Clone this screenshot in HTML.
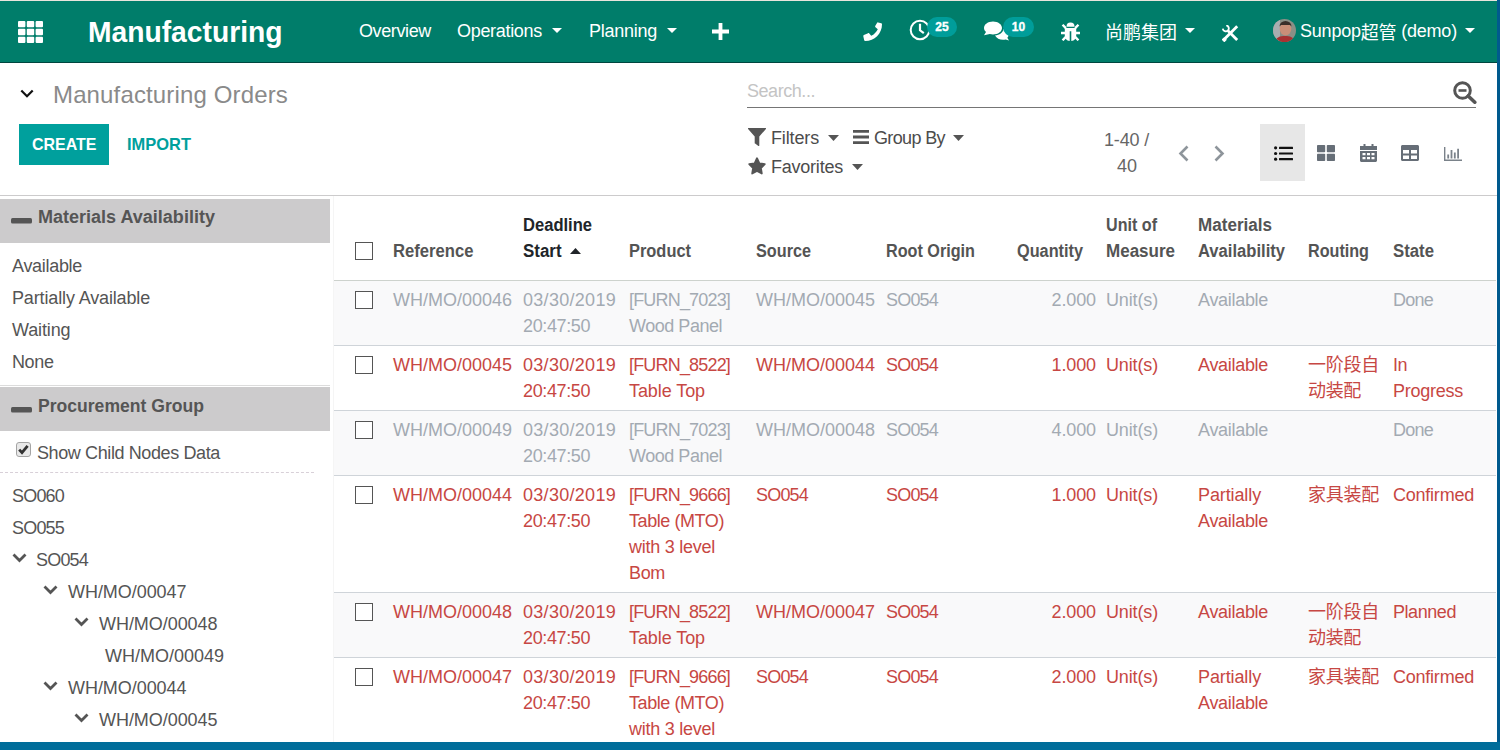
<!DOCTYPE html>
<html lang="en"><head>
<meta charset="utf-8">
<title>Manufacturing Orders - Odoo</title>
<style>
*{box-sizing:border-box}
html,body{margin:0;padding:0}
body{width:1500px;height:750px;overflow:hidden;position:relative;background:#fff;
 font-family:"Liberation Sans","Noto Sans CJK SC",sans-serif;font-size:18px;line-height:26px;color:#4c4c4c}
svg{display:block;position:absolute}
.abs,.t{position:absolute;white-space:nowrap}
th span,td span{white-space:nowrap;text-align:left}
.t{line-height:1}
b,strong,th{font-weight:700}
/* window frame */
.frame-top{position:absolute;left:0;top:0;width:1497px;height:1px;background:#e9e5dd;z-index:9}
.frame-right{position:absolute;left:1497px;top:0;width:3px;height:750px;background:#005a8e;z-index:9}
.frame-bottom{position:absolute;left:0;top:742px;width:1500px;height:8px;background:#006d9a;z-index:9}
/* navbar */
.navbar{position:absolute;left:0;top:1px;width:1497px;height:62px;background:#007d6a;border-bottom:1px solid #00463f;color:#fff}
.navbar .t{color:#fff;font-size:18px}
.brand{font-size:30px !important;font-weight:700}
.cjk{position:relative;top:2px}
.badge{position:absolute;height:20px;border-radius:10px;background:#009d9a;color:#fff;font-size:12px;font-weight:700;line-height:20px;text-align:center;-webkit-text-stroke:0.35px #fff}
/* control panel */
.cp{position:absolute;left:0;top:63px;width:1497px;height:133px;background:#fff;border-bottom:1px solid #cccbcc}
.crumb{font-size:24px;color:#8a8a8a}
.btn-create{position:absolute;left:19px;top:61px;width:90px;height:41px;background:#00a09d;color:#fff;font-weight:700;font-size:17px}
.btn-import{color:#00a09d;font-weight:700;font-size:17px}
.search-line{position:absolute;left:747px;top:44px;width:729px;height:1px;background:#757575}
.placeholder{color:#c4c4c4}
.opt{color:#4c4c4c}
.pager{color:#666}
.vs-active{position:absolute;left:1260px;top:61px;width:45px;height:57px;background:#e7e7e7}
/* side panel */
.side{position:absolute;left:0;top:196px;width:334px;height:546px;border-right:1px solid #f5f5f5;overflow:hidden}
.side h4{position:absolute;left:0;width:330px;height:44px;margin:0;background:#cccbcc;font-size:18px;font-weight:700;color:#555}
.side .t{color:#555}
.dash{position:absolute;left:0;top:276px;width:314px;height:0;border-top:1px dashed #d8d0d8}
.hr{position:absolute;left:0;top:189px;width:330px;height:1px;background:#dcdcdc}
/* list */
.list{position:absolute;left:334px;top:196px;width:1162px;height:546px;overflow:hidden}
table{border-collapse:collapse;table-layout:fixed;width:1162px}
th,td{padding:6px 5px;vertical-align:top;text-align:left;white-space:nowrap;overflow:visible}
thead th{padding:15px 5px 16px;vertical-align:bottom;color:#545454;border-bottom:1px solid #cdd2cd;height:84px}
thead th.sorted{color:#212529}
tbody tr{border-bottom:1px solid #cfd4d9}
tbody tr:nth-child(odd){background:#f9f9fa}
tr.muted td{color:#a3aab2}
tr.danger td{color:#c74743}
td.num,th.num{text-align:right}
th.num{padding-right:18px}
.cb{display:inline-block;width:18px;height:18px;border:1px solid #555;background:#fff;vertical-align:top;margin-top:4px}
th .cb{margin-top:0;margin-bottom:4px;vertical-align:bottom}
td.sel,th.sel{padding-left:21px;padding-right:0}
</style>
</head>
<body>
<div class="frame-top"></div>

<header class="navbar">
  <svg style="left:18px;top:20px" width="25" height="22" viewBox="0 0 25 22" fill="#fff"><rect x="0" y="0" width="7.4" height="6.3" rx="1"></rect><rect x="8.8" y="0" width="7.4" height="6.3" rx="1"></rect><rect x="17.6" y="0" width="7.4" height="6.3" rx="1"></rect><rect x="0" y="7.85" width="7.4" height="6.3" rx="1"></rect><rect x="8.8" y="7.85" width="7.4" height="6.3" rx="1"></rect><rect x="17.6" y="7.85" width="7.4" height="6.3" rx="1"></rect><rect x="0" y="15.7" width="7.4" height="6.3" rx="1"></rect><rect x="8.8" y="15.7" width="7.4" height="6.3" rx="1"></rect><rect x="17.6" y="15.7" width="7.4" height="6.3" rx="1"></rect></svg>
  <a class="t brand" style="left: 88px; top: 16px; width: 194.5px; transform: scaleX(0.941); transform-origin: 0px 50%;">Manufacturing</a>
  <nav>
    <a class="t" style="left: 359px; top: 21px; letter-spacing: -0.38px;">Overview</a>
    <a class="t" style="left: 457px; top: 21px; letter-spacing: -0.31px;">Operations</a>
    <svg style="left:552px;top:27px" width="10" height="5" viewBox="0 0 10 5"><path d="M0 0h10L5 5z" fill="#fff"></path></svg>
    <a class="t" style="left: 589px; top: 21px; letter-spacing: -0.26px;">Planning</a>
    <svg style="left:667px;top:27px" width="10" height="5" viewBox="0 0 10 5"><path d="M0 0h10L5 5z" fill="#fff"></path></svg>
    <svg style="left:712px;top:22px" width="17" height="17" viewBox="0 0 17 17"><path d="M6.6 0h3.8v6.6H17v3.8h-6.6V17H6.6v-6.6H0V6.600h6.6z" fill="#fff"></path></svg>
  </nav>
  <!-- systray -->
  <svg style="left:863px;top:21px" width="19" height="19" viewBox="0 0 19 19"><path d="M14.2 0.300 L18.2 1.2 C18.700 1.3 19 1.700 19 2.200 C19 11.500 11.500 19 2.200 19 C1.700 19 1.300 18.700 1.200 18.200 L0.300 14.200 C0.200 13.700 0.400 13.200 0.900 13 L5.100 11.200 C5.500 11 6 11.100 6.300 11.500 L8.200 13.800 C11.100 12.400 13.400 10.100 14.800 7.200 L12.500 5.300 C12.100 5 12 4.500 12.200 4.100 L14 0.900 C14.200 0.400 14.700 0.200 14.200 0.300z" fill="#fff"></path></svg>
  <svg style="left:909px;top:18px" width="22" height="22" viewBox="0 0 22 22"><circle cx="11" cy="11" r="9.300" fill="none" stroke="#fff" stroke-width="2"></circle><path d="M11 4.800v6.500l3.800 2.800" fill="none" stroke="#fff" stroke-width="2.200"></path></svg>
  <span class="badge" style="left:927px;top:16px;width:30px">25</span>
  <svg style="left:983px;top:19px" width="27" height="21" viewBox="0 0 27 21"><path d="M12 15.500 C13.500 18.300 16.500 19.800 20 19.800 C20.900 19.800 21.800 19.700 22.600 19.500 L26 20.600 L24.300 17.800 C25.300 16.800 25.800 15.600 25.800 14.300 C25.800 11.800 23.500 9.700 20.500 9 C20 12.500 16.500 15.200 12 15.500z" fill="#fff"></path><path d="M10 1.500 C15 1.500 19 4.400 19 8 C19 11.600 15 14.500 10 14.500 C8.900 14.500 7.800 14.400 6.800 14.100 L1 15.300 L3 12 C1.700 10.900 1 9.500 1 8 C1 4.400 5 1.500 10 1.500z" fill="#fff" stroke="#007d6a" stroke-width="1.200" paint-order="stroke"></path></svg>
  <span class="badge" style="left:1003px;top:16px;width:31px">10</span>
  <svg style="left:1061px;top:21px" width="19" height="19" viewBox="0 0 19 19" fill="#fff"><path d="M5.500 4.700 a4 4.200 0 0 1 8 0z"></path><path d="M3.800 6 h11.400 v7.400 a5.700 5.600 0 0 1 -4.900 5.500 v-9.700 h-1.600 v9.700 a5.700 5.600 0 0 1 -4.900 -5.500z"></path><path d="M0 9.800h4.500v2.400h-4.500zM14.500 9.800h4.500v2.400h-4.500z"></path><path d="M0.700 3.600l1.700-1.700 3.300 3.300-1.700 1.700zM18.300 3.600l-1.700-1.700-3.300 3.300 1.700 1.700zM0.700 17.400l1.700 1.700 3.300-3.300-1.700-1.700zM18.300 17.400l-1.700 1.700-3.300-3.300 1.700-1.700z"></path></svg>
  <a class="t" style="left:1105px;top:23px">尚鹏集团</a>
  <svg style="left:1185px;top:27px" width="10" height="5" viewBox="0 0 10 5"><path d="M0 0h10L5 5z" fill="#fff"></path></svg>
  <svg style="left:1222px;top:24px" width="17" height="17" viewBox="0 0 17 17" fill="none" stroke="#fff"><path d="M15.200 1.300 L1.300 15.200" stroke-width="2.800"></path><path d="M1 16 L3.500 13.500" stroke-width="3.800"></path><path d="M6 5.800 L15.200 15" stroke-width="2.800"></path><path d="M0.800 3.600 a3 3 0 0 0 5.200 1.800 a3 3 0 0 0 -1.800 -5" stroke-width="1.800"></path></svg>
  <svg style="left:1273px;top:18px" width="23" height="23" viewBox="0 0 23 23"><defs><clipPath id="av"><circle cx="11.500" cy="11.500" r="11.500"></circle></clipPath></defs><g clip-path="url(#av)"><rect width="23" height="23" fill="#8a8f86"></rect><rect x="0" y="0" width="7" height="23" fill="#a9aeb0"></rect><ellipse cx="12.500" cy="10" rx="5.800" ry="6.500" fill="#c98f78"></ellipse><path d="M6.500 7.500 a6 5.500 0 0 1 12 0 l-1.500 -1.500 h-9z" fill="#3a2f2a"></path><path d="M2 23 c1 -5 5 -6 10 -6 s9 1 10 6z" fill="#a83232"></path></g></svg>
  <a class="t" style="left: 1300px; top: 21px; letter-spacing: -0.21px;">Sunpop<span class="cjk">超管</span> (demo)</a>
  <svg style="left:1465px;top:27px" width="10" height="5" viewBox="0 0 10 5"><path d="M0 0h10L5 5z" fill="#fff"></path></svg>
</header>

<section class="cp">
  <svg style="left:20px;top:26px" width="14" height="9" viewBox="0 0 14 9"><path d="M1.300 1.500 L7 7.200 L12.700 1.500" fill="none" stroke="#111" stroke-width="2.200"></path></svg>
  <h1 class="t crumb" style="left: 53px; top: 20px; margin: 0px; font-weight: 400; letter-spacing: 0.14px;">Manufacturing Orders</h1>
  <button class="btn-create" style="border:0;padding:0;font-family:inherit"><span class="t" style="left: 13px; top: 12px; color: rgb(255, 255, 255); width: 64.5px; transform: scaleX(0.94); transform-origin: 0px 50%;">CREATE</span></button>
  <a class="t btn-import" style="left: 127px; top: 73px; width: 64px; transform: scaleX(0.968); transform-origin: 0px 50%;">IMPORT</a>

  <span class="t placeholder" style="left: 747px; top: 19px; letter-spacing: -0.45px;">Search...</span>
  <div class="search-line"></div>
  <svg style="left:1453px;top:18px" width="24" height="23" viewBox="0 0 24 23"><circle cx="9.500" cy="9.500" r="7.800" fill="none" stroke="#555" stroke-width="3"></circle><path d="M15.200 15 L21.800 21.200" stroke="#555" stroke-width="3.600" stroke-linecap="round"></path><path d="M5.500 9.500h8" stroke="#555" stroke-width="2.600"></path></svg>

  <svg style="left:748px;top:65px" width="18" height="18" viewBox="0 0 18 18"><path d="M0.500 0h17c0.500 0 0.700 0.500 0.400 0.900L11.300 8.500V17.400c0 0.500-0.500 0.700-0.900 0.500l-3.300-2.300c-0.300-0.200-0.400-0.400-0.400-0.700V8.500L0.100 0.900C-0.200 0.500 0 0 0.500 0z" fill="#555"></path></svg>
  <span class="t opt" style="left: 771px; top: 66px; letter-spacing: -0.14px;">Filters</span>
  <svg style="left:828px;top:72px" width="11" height="6" viewBox="0 0 11 6"><path d="M0 0h11L5.500 6z" fill="#555"></path></svg>
  <svg style="left:853px;top:67px" width="16" height="14" viewBox="0 0 16 14"><path d="M0 0h16v2.800H0zM0 5.600h16v2.800H0zM0 11.200h16V14H0z" fill="#555"></path></svg>
  <span class="t opt" style="left: 874px; top: 66px; letter-spacing: -0.63px;">Group By</span>
  <svg style="left:953px;top:72px" width="11" height="6" viewBox="0 0 11 6"><path d="M0 0h11L5.500 6z" fill="#555"></path></svg>
  <svg style="left:748px;top:94px" width="18" height="18" viewBox="0 0 18 18"><path d="M9 1.200l2.400 5.100 5.400 0.800-3.900 3.900 0.900 5.500L9 13.900l-4.800 2.600 0.900-5.500L1.200 7.100l5.400-0.800z" fill="#555" stroke="#555" stroke-width="1.800" stroke-linejoin="round"></path></svg>
  <span class="t opt" style="left: 771px; top: 95px; letter-spacing: -0.23px;">Favorites</span>
  <svg style="left:852px;top:101px" width="11" height="6" viewBox="0 0 11 6"><path d="M0 0h11L5.500 6z" fill="#555"></path></svg>

  <span class="t pager" style="left: 1104px; top: 68px; letter-spacing: -0.17px;">1-40 /</span>
  <span class="t pager" style="left: 1117px; top: 94px; letter-spacing: -0.02px;">40</span>
  <svg style="left:1178px;top:82px" width="11" height="17" viewBox="0 0 11 17"><path d="M9.500 1.500 L2.500 8.500 L9.500 15.500" fill="none" stroke="#8e959b" stroke-width="2.600"></path></svg>
  <svg style="left:1214px;top:82px" width="11" height="17" viewBox="0 0 11 17"><path d="M1.500 1.500 L8.500 8.500 L1.500 15.500" fill="none" stroke="#8e959b" stroke-width="2.600"></path></svg>

  <div class="vs-active"></div>
  <svg style="left:1274px;top:83px" width="19" height="15" viewBox="0 0 19 15" fill="#111"><circle cx="1.600" cy="1.800" r="1.600"></circle><circle cx="1.600" cy="7.500" r="1.600"></circle><circle cx="1.600" cy="13.200" r="1.600"></circle><rect x="5" y="0.700" width="14" height="2.200" rx="0.500"></rect><rect x="5" y="6.400" width="14" height="2.200" rx="0.500"></rect><rect x="5" y="12.100" width="14" height="2.200" rx="0.500"></rect></svg>
  <svg style="left:1317px;top:82px" width="18" height="16" viewBox="0 0 18 16" fill="#666e77"><rect x="0" y="0" width="8.200" height="7.200" rx="0.800"></rect><rect x="9.800" y="0" width="8.200" height="7.200" rx="0.800"></rect><rect x="0" y="8.800" width="8.200" height="7.200" rx="0.800"></rect><rect x="9.800" y="8.800" width="8.200" height="7.200" rx="0.800"></rect></svg>
  <svg style="left:1360px;top:81px" width="17" height="18" viewBox="0 0 17 18" fill="#666e77"><path d="M3.500 0h2v3h-2zM11.500 0h2v3h-2z"></path><path d="M0 2h17v4H0z"></path><path d="M0 7h17v9.500c0 0.800-0.700 1.500-1.500 1.500h-14C0.700 18 0 17.300 0 16.500z M2.500 9v2.300h3V9z M7 9v2.300h3V9z M11.500 9v2.300h3V9z M2.500 13v2.300h3V13z M7 13v2.300h3V13z M11.500 13v2.300h3V13z" fill-rule="evenodd"></path></svg>
  <svg style="left:1401px;top:82px" width="18" height="16" viewBox="0 0 18 16" fill="#666e77"><path d="M1.500 0h15c0.800 0 1.500 0.700 1.500 1.500v13c0 0.800-0.700 1.500-1.500 1.500h-15C0.700 16 0 15.300 0 14.500v-13C0 0.700 0.700 0 1.500 0z M2 5v3.500h6V5z M10 5v3.500h6V5z M2 10.500V14h6v-3.500z M10 10.500V14h6v-3.500z" fill-rule="evenodd"></path></svg>
  <svg style="left:1444px;top:84px" width="18" height="14" viewBox="0 0 18 14" fill="#7a828a"><path d="M0 0h1.400v12.600H18V14H0z"></path><path d="M3.300 7.500h1.800v4H3.300zM6.600 3h1.800v8.500H6.600zM9.900 5.500h1.800v6H9.900zM13.200 1.800h1.800v9.700h-1.800z"></path></svg>
</section>

<aside class="side">
  <h4 style="top:3px"><svg style="left:11px;top:19px" width="21" height="6" viewBox="0 0 21 6"><rect width="21" height="5.500" rx="1.500" fill="#555"></rect></svg><span class="t" style="left: 38px; top: 9px; width: 177px; transform: scaleX(1.001); transform-origin: 0px 50%;">Materials Availability</span></h4>
  <span class="t" style="left: 12px; top: 61px; letter-spacing: -0.3px;">Available</span>
  <span class="t" style="left: 12px; top: 93px; letter-spacing: -0.14px;">Partially Available</span>
  <span class="t" style="left: 12px; top: 125px; letter-spacing: -0.12px;">Waiting</span>
  <span class="t" style="left: 12px; top: 157px; letter-spacing: -0.38px;">None</span>
  <div class="hr"></div>
  <h4 style="top:191px"><svg style="left:11px;top:20px" width="21" height="6" viewBox="0 0 21 6"><rect width="21" height="5.500" rx="1.500" fill="#555"></rect></svg><span class="t" style="left: 38px; top: 10px; width: 166px; transform: scaleX(0.976); transform-origin: 0px 50%;">Procurement Group</span></h4>
  <svg style="left:16px;top:246px" width="15" height="15" viewBox="0 0 15 15"><rect x="0.500" y="0.500" width="14" height="14" rx="2.500" fill="#e9e9e9" stroke="#a4a4a4"></rect><path d="M3.200 7.600l2.800 3 5.600-6.800" fill="none" stroke="#333" stroke-width="2.800"></path></svg>
  <span class="t" style="left: 37px; top: 248px; letter-spacing: -0.39px;">Show Child Nodes Data</span>
  <div class="dash"></div>
  <span class="t" style="left: 12px; top: 291px; letter-spacing: -0.81px;">SO060</span>
  <span class="t" style="left: 12px; top: 323px; letter-spacing: -0.81px;">SO055</span>
  <svg class="chev" style="left:12px;top:357px" width="15" height="10" viewBox="0 0 15 10"><path d="M1.500 1.500 L7.500 7.500 L13.500 1.500" fill="none" stroke="#555" stroke-width="2.800"></path></svg>
  <span class="t" style="left: 36px; top: 355px; letter-spacing: -0.81px;">SO054</span>
  <svg class="chev" style="left:43px;top:389px" width="15" height="10" viewBox="0 0 15 10"><path d="M1.500 1.500 L7.500 7.500 L13.500 1.500" fill="none" stroke="#555" stroke-width="2.800"></path></svg>
  <span class="t" style="left: 68px; top: 387px; letter-spacing: -0.05px;">WH/MO/00047</span>
  <svg class="chev" style="left:74px;top:421px" width="15" height="10" viewBox="0 0 15 10"><path d="M1.500 1.500 L7.500 7.500 L13.500 1.500" fill="none" stroke="#555" stroke-width="2.800"></path></svg>
  <span class="t" style="left: 99px; top: 419px; letter-spacing: -0.05px;">WH/MO/00048</span>
  <span class="t" style="left:105px;top:451px">WH/MO/00049</span>
  <svg class="chev" style="left:43px;top:485px" width="15" height="10" viewBox="0 0 15 10"><path d="M1.500 1.500 L7.500 7.500 L13.500 1.500" fill="none" stroke="#555" stroke-width="2.800"></path></svg>
  <span class="t" style="left: 68px; top: 483px; letter-spacing: -0.05px;">WH/MO/00044</span>
  <svg class="chev" style="left:74px;top:517px" width="15" height="10" viewBox="0 0 15 10"><path d="M1.500 1.500 L7.500 7.500 L13.500 1.500" fill="none" stroke="#555" stroke-width="2.800"></path></svg>
  <span class="t" style="left: 99px; top: 515px; letter-spacing: -0.05px;">WH/MO/00045</span>
</aside>

<main class="list">
<table>
<colgroup><col style="width:54px"><col style="width:130px"><col style="width:106px"><col style="width:127px"><col style="width:130px"><col style="width:126px"><col style="width:94px"><col style="width:92px"><col style="width:110px"><col style="width:85px"><col style="width:108px"></colgroup>
<thead>
<tr>
 <th class="sel"><span class="cb"></span></th>
 <th><span style="display: inline-block; width: 80.5px; transform: scaleX(0.925); transform-origin: 0px 50%;">Reference</span></th>
 <th class="sorted"><span style="display: inline-block; width: 69px; transform: scaleX(0.92); transform-origin: 0px 50%;">Deadline</span><br><span style="display: inline-block; width: 38.5px; transform: scaleX(0.939); transform-origin: 0px 50%;">Start</span> <svg style="position:static;display:inline-block;margin-left:3px;vertical-align:3px" width="11" height="6" viewBox="0 0 11 6"><path d="M0 6h11L5.500 0z" fill="#212529"></path></svg></th>
 <th><span style="display: inline-block; width: 62px; transform: scaleX(0.912); transform-origin: 0px 50%;">Product</span></th>
 <th><span style="display: inline-block; width: 55px; transform: scaleX(0.901); transform-origin: 0px 50%;">Source</span></th>
 <th><span style="display: inline-block; width: 89px; transform: scaleX(0.899); transform-origin: 0px 50%;">Root Origin</span></th>
 <th class="num"><span style="display: inline-block; width: 66px; transform: scaleX(0.904); transform-origin: 0px 50%;">Quantity</span></th>
 <th><span style="display: inline-block; width: 51px; transform: scaleX(0.895); transform-origin: 0px 50%;">Unit of</span><br><span style="display: inline-block; width: 69px; transform: scaleX(0.945); transform-origin: 0px 50%;">Measure</span></th>
 <th><span style="display: inline-block; width: 74px; transform: scaleX(0.948); transform-origin: 0px 50%;">Materials</span><br><span style="display: inline-block; width: 87px; transform: scaleX(0.922); transform-origin: 0px 50%;">Availability</span></th>
 <th><span style="display: inline-block; width: 61px; transform: scaleX(0.897); transform-origin: 0px 50%;">Routing</span></th>
 <th><span style="display: inline-block; width: 41px; transform: scaleX(0.931); transform-origin: 0px 50%;">State</span></th>
</tr>
</thead>
<tbody>
<tr class="muted">
 <td class="sel"><span class="cb"></span></td>
 <td><span>WH/MO/00046</span></td>
 <td><span style="letter-spacing: 0.29px;">03/30/2019</span><br><span style="letter-spacing: -0.38px;">20:47:50</span></td>
 <td><span style="letter-spacing: -0.82px;">[FURN_7023]</span><br><span style="letter-spacing: -0.47px;">Wood Panel</span></td>
 <td><span>WH/MO/00045</span></td>
 <td><span style="letter-spacing: -0.81px;">SO054</span></td>
 <td class="num"><span style="letter-spacing: -0.11px;">2.000</span></td>
 <td><span style="letter-spacing: -0.14px;">Unit(s)</span></td>
 <td><span style="letter-spacing: -0.3px;">Available</span></td>
 <td></td>
 <td><span style="letter-spacing: -0.76px;">Done</span></td>
</tr>
<tr class="danger">
 <td class="sel"><span class="cb"></span></td>
 <td><span>WH/MO/00045</span></td>
 <td><span style="letter-spacing: 0.29px;">03/30/2019</span><br><span style="letter-spacing: -0.38px;">20:47:50</span></td>
 <td><span style="letter-spacing: -0.82px;">[FURN_8522]</span><br><span style="letter-spacing: -0.08px;">Table Top</span></td>
 <td><span>WH/MO/00044</span></td>
 <td><span style="letter-spacing: -0.81px;">SO054</span></td>
 <td class="num"><span style="letter-spacing: -0.11px;">1.000</span></td>
 <td><span style="letter-spacing: -0.14px;">Unit(s)</span></td>
 <td><span style="letter-spacing: -0.3px;">Available</span></td>
 <td><span style="letter-spacing: -0.25px;">一阶段自</span><br><span style="letter-spacing: -0.33px;">动装配</span></td>
 <td><span style="letter-spacing: -0.51px;">In</span><br><span style="letter-spacing: -0.25px;">Progress</span></td>
</tr>
<tr class="muted">
 <td class="sel"><span class="cb"></span></td>
 <td><span>WH/MO/00049</span></td>
 <td><span style="letter-spacing: 0.29px;">03/30/2019</span><br><span style="letter-spacing: -0.38px;">20:47:50</span></td>
 <td><span style="letter-spacing: -0.82px;">[FURN_7023]</span><br><span style="letter-spacing: -0.47px;">Wood Panel</span></td>
 <td><span>WH/MO/00048</span></td>
 <td><span style="letter-spacing: -0.81px;">SO054</span></td>
 <td class="num"><span style="letter-spacing: -0.11px;">4.000</span></td>
 <td><span style="letter-spacing: -0.14px;">Unit(s)</span></td>
 <td><span style="letter-spacing: -0.3px;">Available</span></td>
 <td></td>
 <td><span style="letter-spacing: -0.76px;">Done</span></td>
</tr>
<tr class="danger">
 <td class="sel"><span class="cb"></span></td>
 <td><span>WH/MO/00044</span></td>
 <td><span style="letter-spacing: 0.29px;">03/30/2019</span><br><span style="letter-spacing: -0.38px;">20:47:50</span></td>
 <td><span style="letter-spacing: -0.82px;">[FURN_9666]</span><br><span style="letter-spacing: -0.43px;">Table (MTO)</span><br><span style="letter-spacing: -0.25px;">with 3 level</span><br><span style="letter-spacing: -0.34px;">Bom</span></td>
 <td><span style="letter-spacing: -0.81px;">SO054</span></td>
 <td><span style="letter-spacing: -0.81px;">SO054</span></td>
 <td class="num"><span style="letter-spacing: -0.11px;">1.000</span></td>
 <td><span style="letter-spacing: -0.14px;">Unit(s)</span></td>
 <td><span style="letter-spacing: -0.11px;">Partially</span><br><span style="letter-spacing: -0.3px;">Available</span></td>
 <td><span style="letter-spacing: -0.25px;">家具装配</span></td>
 <td><span style="letter-spacing: -0.23px;">Confirmed</span></td>
</tr>
<tr class="danger">
 <td class="sel"><span class="cb"></span></td>
 <td><span>WH/MO/00048</span></td>
 <td><span style="letter-spacing: 0.29px;">03/30/2019</span><br><span style="letter-spacing: -0.38px;">20:47:50</span></td>
 <td><span style="letter-spacing: -0.82px;">[FURN_8522]</span><br><span style="letter-spacing: -0.08px;">Table Top</span></td>
 <td><span>WH/MO/00047</span></td>
 <td><span style="letter-spacing: -0.81px;">SO054</span></td>
 <td class="num"><span style="letter-spacing: -0.11px;">2.000</span></td>
 <td><span style="letter-spacing: -0.14px;">Unit(s)</span></td>
 <td><span style="letter-spacing: -0.3px;">Available</span></td>
 <td><span style="letter-spacing: -0.25px;">一阶段自</span><br><span style="letter-spacing: -0.33px;">动装配</span></td>
 <td><span style="letter-spacing: -0.44px;">Planned</span></td>
</tr>
<tr class="danger">
 <td class="sel"><span class="cb"></span></td>
 <td><span>WH/MO/00047</span></td>
 <td><span style="letter-spacing: 0.29px;">03/30/2019</span><br><span style="letter-spacing: -0.38px;">20:47:50</span></td>
 <td><span style="letter-spacing: -0.82px;">[FURN_9666]</span><br><span style="letter-spacing: -0.43px;">Table (MTO)</span><br><span style="letter-spacing: -0.25px;">with 3 level</span><br><span style="letter-spacing: -0.34px;">Bom</span></td>
 <td><span style="letter-spacing: -0.81px;">SO054</span></td>
 <td><span style="letter-spacing: -0.81px;">SO054</span></td>
 <td class="num"><span style="letter-spacing: -0.11px;">2.000</span></td>
 <td><span style="letter-spacing: -0.14px;">Unit(s)</span></td>
 <td><span style="letter-spacing: -0.11px;">Partially</span><br><span style="letter-spacing: -0.3px;">Available</span></td>
 <td><span style="letter-spacing: -0.25px;">家具装配</span></td>
 <td><span style="letter-spacing: -0.23px;">Confirmed</span></td>
</tr>
</tbody>
</table>
</main>

<div class="frame-right"></div>
<div class="frame-bottom"></div>


</body></html>
